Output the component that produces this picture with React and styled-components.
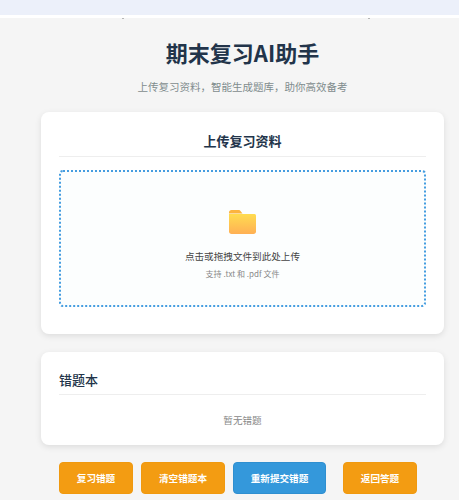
import React from 'react';
import styled, { createGlobalStyle } from 'styled-components';

const GlobalStyle = createGlobalStyle`
  html, body { margin: 0; padding: 0; background: #f5f5f5; }
  body { font-family: "Noto Sans CJK SC", "Noto Sans", sans-serif; overflow: hidden; }
`;

const TopStrip = styled.div`
  height: 15px;
  background: #ecf0fa;
  border-bottom: 3px solid #ffffff;
`;

const Page = styled.div`
  height: 482px;
  padding: 0 15px 0 41px;
  overflow: hidden;
  background:
    linear-gradient(#b5b5b5, #b5b5b5) 122px 0 / 2px 1px no-repeat,
    linear-gradient(#b5b5b5, #b5b5b5) 368px 0 / 2px 1px no-repeat;
`;

const Header = styled.header`
  text-align: center;
  padding-top: 18px;
  height: 76px;
`;

const Title = styled.h1`
  margin: 0;
  font-size: 22px;
  line-height: 32px;
  font-weight: 700;
  color: #22344a;
`;

const Subtitle = styled.p`
  margin: 11px 0 0;
  font-size: 10.5px;
  line-height: 16px;
  color: #7f8c8d;
`;

const Card = styled.section`
  background: #ffffff;
  border-radius: 8px;
  box-shadow: 0 2px 6px rgba(0, 0, 0, 0.1);
  padding: ${p => p.$pad};
  margin-bottom: 18px;
`;

const CardTitle = styled.h2`
  margin: 0;
  font-size: 13px;
  line-height: 19px;
  font-weight: ${p => p.$weight || 700};
  color: #22344a;
  text-align: ${p => p.$align || 'left'};
  padding-bottom: ${p => p.$under || 6}px;
  border-bottom: 1px solid #eeeeee;
`;

const DropZone = styled.div`
  margin-top: 13px;
  height: 137px;
  box-sizing: border-box;
  border: 2px dotted #459de0;
  border-radius: 4px;
  background: #fcfefe;
  display: flex;
  flex-direction: column;
  align-items: center;
  padding-top: 37px;
`;

const FolderIcon = styled.svg`
  width: 29px;
  height: 26px;
  display: block;
`;

const DropText = styled.div`
  margin-top: 14px;
  font-size: 9.6px;
  line-height: 14px;
  color: #444444;
`;

const DropHint = styled.div`
  margin-top: 5px;
  font-size: 8px;
  line-height: 12px;
  color: #888888;
`;

const Empty = styled.div`
  margin-top: 18px;
  text-align: center;
  font-size: 9.6px;
  line-height: 14px;
  color: #888888;
`;

const ButtonRow = styled.div`
  display: flex;
  padding-left: 18px;
  margin-top: -1px;
`;

const ActionButton = styled.button`
  width: ${p => p.$w}px;
  height: 32px;
  margin-left: ${p => p.$gap}px;
  padding: 0;
  border: 1px solid ${p => (p.$blue ? '#2f8fd0' : '#f0990f')};
  border-radius: 4px;
  background: ${p => (p.$blue ? '#3498db' : '#f39c12')};
  color: #ffffff;
  font-family: inherit;
  font-size: 9.6px;
  font-weight: 700;
`;

export default function App() {
  return (
    <>
      <GlobalStyle />
      <TopStrip />
      <Page>
        <Header>
          <Title>期末复习AI助手</Title>
          <Subtitle>上传复习资料，智能生成题库，助你高效备考</Subtitle>
        </Header>
        <Card $pad="19px 18px 27px">
          <CardTitle $align="center">上传复习资料</CardTitle>
          <DropZone>
            <FolderIcon viewBox="0 0 29 26">
              <defs>
                <linearGradient id="folderFill" x1="0" y1="0" x2="0" y2="1">
                  <stop offset="0" stopColor="#ffdc50" />
                  <stop offset="1" stopColor="#ffb054" />
                </linearGradient>
              </defs>
              <path d="M1 3.500C1 2 2 1 3.500 1h7c1 0 1.600.4 2.200 1.200L14.500 4.500H1z" fill="#fcb43f" />
              <path d="M1 5h25.500C27.800 5 28 6 28 7v15.500c0 1.500-1 2.500-2.500 2.500h-22C2 25 1 24 1 22.500z" fill="url(#folderFill)" />
            </FolderIcon>
            <DropText>点击或拖拽文件到此处上传</DropText>
            <DropHint>支持 .txt 和 .pdf 文件</DropHint>
          </DropZone>
        </Card>
        <Card $pad="18px 18px 18px">
          <CardTitle $weight={500} $under={5}>错题本</CardTitle>
          <Empty>暂无错题</Empty>
        </Card>
        <ButtonRow>
          <ActionButton $w={74} $gap={0}>复习错题</ActionButton>
          <ActionButton $w={84} $gap={8}>清空错题本</ActionButton>
          <ActionButton $w={93} $gap={8} $blue>重新提交错题</ActionButton>
          <ActionButton $w={74} $gap={17}>返回答题</ActionButton>
        </ButtonRow>
      </Page>
    </>
  );
}
